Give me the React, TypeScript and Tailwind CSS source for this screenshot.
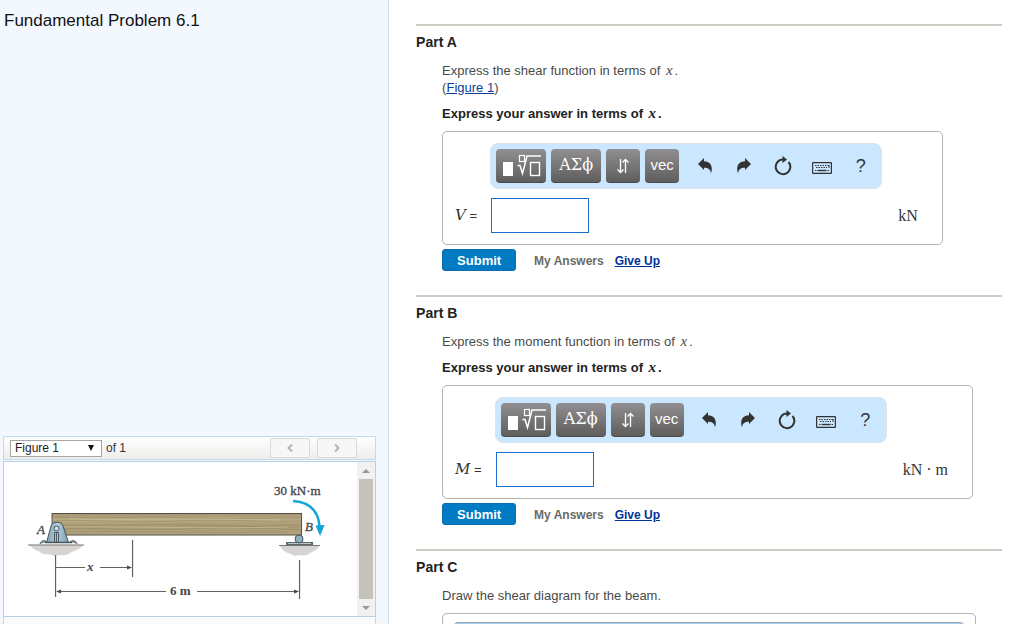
import React, { useState } from 'react';

const toolButton =
  'h-[34px] rounded-[4px] bg-gradient-to-b from-[#918f92] to-[#605e5c] border-b border-[#4d4b49] text-white flex items-center justify-center shrink-0';
const iconButton = 'w-[39px] h-[34px] flex items-center justify-center text-[#333] shrink-0';

function TemplateIcon() {
  return (
    <svg width="42" height="24" viewBox="0 0 42 24" fill="none" stroke="#fff" aria-hidden="true">
      <rect x="3" y="8" width="10" height="14" fill="#fff" stroke="none" />
      <rect x="19.500" y="1.500" width="5" height="6" strokeWidth="1.200" />
      <path d="M17.500 11.500h2.500l2.500 8 4.500-17.500H41" strokeWidth="1.500" />
      <rect x="30.500" y="8.500" width="9" height="13" strokeWidth="1.400" />
    </svg>
  );
}

function UpDownIcon() {
  return (
    <svg width="14" height="16" viewBox="0 0 14 16" fill="none" stroke="#fff" strokeWidth="1.300" aria-hidden="true">
      <path d="M4.500 1v13.500M1.500 11.500l3 3 3-3" />
      <path d="M9.500 15V1.500M6.500 4.500l3-3 3 3" />
    </svg>
  );
}

function UndoIcon({ flip = false }: { flip?: boolean }) {
  return (
    <svg width="16" height="18" viewBox="0 0 16 18" fill="currentColor" className={flip ? '-scale-x-100' : ''} aria-hidden="true">
      <path d="M1 7L7 1v3.300c6 .2 9.500 4.500 7 12.200-.3-3.700-2.500-5.700-7-5.700V13z" />
    </svg>
  );
}

function ResetIcon() {
  return (
    <svg width="18" height="20" viewBox="0 0 18 20" fill="none" stroke="currentColor" aria-hidden="true">
      <path d="M9 3.500a7.300 7.300 0 1 0 5.500 2.500" strokeWidth="2" />
      <path d="M8.500 0L13 3.500 8.500 7z" fill="currentColor" stroke="none" />
    </svg>
  );
}

function KeyboardIcon() {
  return (
    <svg width="20" height="12" viewBox="0 0 20 12" fill="none" stroke="currentColor" className="mt-1" aria-hidden="true">
      <rect x="0.600" y="0.600" width="18.800" height="10.800" rx="0.500" strokeWidth="1.200" />
      <path d="M3 3.500h14M4 5.500h11" strokeDasharray="1.500 1" strokeWidth="1" />
      <path d="M3 8.500h1.500M15.500 8.500H17M17 3v3" strokeWidth="1" />
      <path d="M5.500 8.500h9" strokeWidth="1.400" />
    </svg>
  );
}

function Toolbar() {
  return (
    <div className="flex items-center h-[46px] pl-[5px] pr-px rounded-lg bg-[#cae7ff] border border-[#dde3e8]">
      <div className="flex gap-[5px] mr-1.5">
        <button className={`${toolButton} w-[50px]`} aria-label="Templates">
          <TemplateIcon />
        </button>
        <button className={`${toolButton} w-[50px] font-['DejaVu_Serif',serif] text-[16px] pb-0.5`}>ΑΣϕ</button>
        <button className={`${toolButton} w-[34px]`} aria-label="Sub and superscript">
          <UpDownIcon />
        </button>
        <button className={`${toolButton} w-[34px] text-[15px] pb-0.5`}>vec</button>
      </div>
      <button className={iconButton} aria-label="Undo">
        <UndoIcon />
      </button>
      <button className={iconButton} aria-label="Redo">
        <UndoIcon flip />
      </button>
      <button className={iconButton} aria-label="Reset">
        <ResetIcon />
      </button>
      <button className={iconButton} aria-label="Keyboard shortcuts">
        <KeyboardIcon />
      </button>
      <button className={`${iconButton} text-[18px]`}>?</button>
    </div>
  );
}

function MathX() {
  return <i className="font-['Liberation_Serif',serif] text-[15px] leading-none mx-0.5">x</i>;
}

function AnswerBox({ id, symbol, unit }: { id: string; symbol: string; unit: string }) {
  const [value, setValue] = useState('');

  return (
    <>
      <div className="w-fit grid grid-cols-[auto_auto_auto] mt-[9px] pt-[11px] pb-[11px] pl-3 pr-6 border border-[#b5b3aa] rounded-[5px]">
        <div className="col-start-2">
          <Toolbar />
        </div>
        <label htmlFor={id} className="row-start-2 self-center pt-2 pr-[13px] text-[13px] text-[#333]">
          <i className="font-['DejaVu_Serif',serif] text-[15px]">{symbol}</i> =
        </label>
        <input
          id={id}
          value={value}
          onChange={(e) => setValue(e.target.value)}
          className="row-start-2 col-start-2 mt-[9px] ml-px w-[98px] h-[35px] px-2 bg-white border border-[#1a6fce] outline-none"
        />
        <span className="row-start-2 col-start-3 self-center pt-2 pl-4 font-['Liberation_Serif',serif] text-[16px] text-[#333]">
          {unit}
        </span>
      </div>
      <div className="flex items-center mt-1 text-[12px] font-bold">
        <button className="w-[74px] h-[22px] rounded-[3px] bg-[#007bc4] border border-[#0a6cab] text-white text-[13px] leading-none">
          Submit
        </button>
        <span className="ml-[18px] pt-0.5 text-[#6b6b66]">My Answers</span>
        <a href="#giveup" className="ml-[11px] pt-0.5 text-[#003399] underline">Give Up</a>
      </div>
    </>
  );
}

function Part({ title, children }: { title: string; children: React.ReactNode }) {
  return (
    <section className="border-t-2 border-[#cfcbc5] pt-1.5 pb-6">
      <h2 className="text-[14px] leading-5 font-bold text-[#222]">{title}</h2>
      <div className="mt-[10px] ml-[26px] text-[13px] leading-[17px] text-[#4a4a4a]">{children}</div>
    </section>
  );
}

function BeamFigure() {
  return (
    <svg viewBox="4 462 353 154" className="w-full h-[154px]" fontFamily="Liberation Serif, serif" fontSize="13" fill="#444">
      <defs>
        <linearGradient id="wood" x1="0" y1="0" x2="0" y2="1">
          <stop offset="0" stopColor="#a39672" />
          <stop offset="0.300" stopColor="#b8aa84" />
          <stop offset="0.600" stopColor="#a79872" />
          <stop offset="1" stopColor="#b3a57f" />
        </linearGradient>
        <linearGradient id="steel" x1="0" y1="0" x2="1" y2="0">
          <stop offset="0" stopColor="#7fa0b2" />
          <stop offset="0.500" stopColor="#b4cedb" />
          <stop offset="1" stopColor="#7c9cae" />
        </linearGradient>
      </defs>

      {/* Beam */}
      <rect x="52" y="513.500" width="249.500" height="21.500" fill="url(#wood)" stroke="#554f42" />
      <g stroke="#8f8260" strokeWidth="0.800" fill="none" opacity="0.500">
        <path d="M53 517c50 2 90-1 140 1s80-1 108 0M53 521c30-2 70 2 120 0s90 1 128 0" />
        <path d="M53 525c60 2 100-2 150 0s70 2 98-1M53 529c40-2 90 2 130 0s90-1 118 1M60 532c60-1 140 1 230 0" />
      </g>
      <path d="M70 519c60 1 110-1 210 1M62 527c70-1 130 2 225 0" stroke="#c8bb97" strokeWidth="0.800" fill="none" />

      {/* Ground */}
      <path d="M30 545h53c-3 5-9 5-13 8-5 4-11 1-15 3-6-3-11 0-15-4-4-2-8-3-10-7z" fill="#d7d5d3" />
      <path d="M280 546h39c-2 5-7 5-10 8-5 3-10 0-14 2-5-3-12-3-15-10z" fill="#d7d5d3" />
      <path d="M28 545h56M279 545.500h41" stroke="#77736e" strokeWidth="1.200" />

      {/* Pin support */}
      <path d="M40 544c1-4 5-4 7-2M77 544c-1-4-5-4-7-2" fill="#8a99a1" stroke="#4d5860" strokeWidth="1" />
      <path d="M46.500 542.500L51 526c1-5 11-5 12 0l5.500 16.500z" fill="url(#steel)" stroke="#46545d" />
      <path d="M45 542.500h27" stroke="#46545d" strokeWidth="1.500" />
      <circle cx="56.500" cy="528.500" r="2.500" fill="#d4e1e8" stroke="#46545d" />
      <path d="M54.500 542v-9.500h4V542M56.500 533v9" fill="none" stroke="#46545d" strokeWidth="1" />

      {/* Roller support */}
      <path d="M286 543.500h27" stroke="#5c676e" strokeWidth="3" />
      <path d="M288 543.500h23" stroke="#b9c6cc" strokeWidth="1" />
      <circle cx="299" cy="539" r="4" fill="#8db0c2" stroke="#46545d" />

      {/* Dimensions */}
      <g stroke="#66625d" strokeWidth="1.200">
        <path d="M55.500 555v42M132.500 540v37M299.500 560v39" />
        <path d="M56 567.500h29M100 567.500h31M57 591.500h109M197 591.500h101" />
      </g>
      <path d="M132 567.500l-5-2v4zM56 591.500l5-2v4zM299 591.500l-5-2v4z" fill="#4b4743" />

      {/* Moment */}
      <path d="M293 501c15 1 25 9 26.500 25" fill="none" stroke="#12a5d8" strokeWidth="2.400" />
      <path d="M315.500 525.500l9-.5-4.500 11z" fill="#12a5d8" />

      <text x="274" y="495" stroke="#444" strokeWidth="0.300">30 kN·m</text>
      <text x="37" y="534" fontStyle="italic" stroke="#444" strokeWidth="0.300">A</text>
      <text x="305" y="531" fontStyle="italic" stroke="#444" strokeWidth="0.300">B</text>
      <text x="87" y="571" fontStyle="italic" fontWeight="bold">x</text>
      <text x="170" y="595" fontWeight="bold">6 m</text>
    </svg>
  );
}

function NavButton({ label, path }: { label: string; path: string }) {
  return (
    <button aria-label={label} className="w-10 h-5 flex items-center justify-center rounded-[2px] border border-[#d9d9d9] bg-[#f7f7f7]">
      <svg width="8" height="8" viewBox="0 0 8 8" fill="none" stroke="#b3b3b3" strokeWidth="2" aria-hidden="true">
        <path d={path} />
      </svg>
    </button>
  );
}

function FigurePanel() {
  return (
    <div className="mt-auto ml-[3px] mr-3">
      <div className="flex items-center h-6 pl-1.5 pr-[18px] border border-[#c3daea] bg-gradient-to-b from-white to-[#ededeb] text-[12px] text-[#333]">
        <div className="relative">
          <select
            aria-label="Figure"
            className="block appearance-none w-[92px] h-[17px] pl-1 bg-white border border-[#a6a6a6] text-[12px] leading-[15px] text-[#222]"
          >
            <option>Figure 1</option>
          </select>
          <svg width="6" height="6" viewBox="0 0 6 6" className="absolute right-2 top-[5px] pointer-events-none" aria-hidden="true">
            <path d="M0 0h6L3 6z" fill="#111" />
          </svg>
        </div>
        <span className="ml-1">of 1</span>
        <div className="ml-auto flex gap-[7px]">
          <NavButton label="Previous figure" path="M6 0.500L2.500 4 6 7.500" />
          <NavButton label="Next figure" path="M2 0.500L5.500 4 2 7.500" />
        </div>
      </div>
      <div className="flex mt-px border border-[#b5d0e3] bg-white">
        <div className="flex-1">
          <BeamFigure />
        </div>
        <div className="w-[18px] px-0.5 flex flex-col bg-[#f1f1f1]">
          <button aria-label="Scroll up" className="h-[17px] flex items-center justify-center">
            <svg width="8" height="4" viewBox="0 0 8 4" aria-hidden="true"><path d="M0 4h8L4 0z" fill="#9a9892" /></svg>
          </button>
          <div className="flex-1 bg-[#c5c1bb]" />
          <button aria-label="Scroll down" className="h-[17px] flex items-center justify-center">
            <svg width="8" height="4" viewBox="0 0 8 4" aria-hidden="true"><path d="M0 0h8L4 4z" fill="#9a9892" /></svg>
          </button>
        </div>
      </div>
      <div className="h-[7px] border-x border-[#c3daea] bg-[#fafafa]" />
    </div>
  );
}

export default function App() {
  return (
    <div className="flex h-screen overflow-hidden bg-white font-['Liberation_Sans',Arial,sans-serif]">
      <aside className="w-[38%] flex flex-col bg-[#f3f8ff] border-r border-[#d3e0ec]">
        <h1 className="pt-[11px] pl-1 text-[17px] leading-5 text-[#111]">Fundamental Problem 6.1</h1>
        <FigurePanel />
      </aside>

      <main className="flex-1 pt-6 pl-[27px] pr-[22px] overflow-hidden">
        <Part title="Part A">
          <p>
            Express the shear function in terms of <MathX />.
            <br />(<a href="#figure1" className="text-[#0b3f9c] underline">Figure 1</a>)
          </p>
          <p className="mt-[9px] font-bold text-[#222]">
            Express your answer in terms of <MathX />.
          </p>
          <AnswerBox id="shear" symbol="V" unit="kN" />
        </Part>

        <Part title="Part B">
          <p>Express the moment function in terms of <MathX />.</p>
          <p className="mt-[9px] font-bold text-[#222]">
            Express your answer in terms of <MathX />.
          </p>
          <AnswerBox id="moment" symbol="M" unit="kN · m" />
        </Part>

        <Part title="Part C">
          <p>Draw the shear diagram for the beam.</p>
          <div className="mt-[9px] mr-[26px] h-[320px] px-[11px] pt-2 border border-[#b5b3aa] rounded-[5px]">
            <div className="h-10 bg-[#a5cdf0] border-t border-[#9aa6b0] rounded-t-sm" />
          </div>
        </Part>
      </main>
    </div>
  );
}
